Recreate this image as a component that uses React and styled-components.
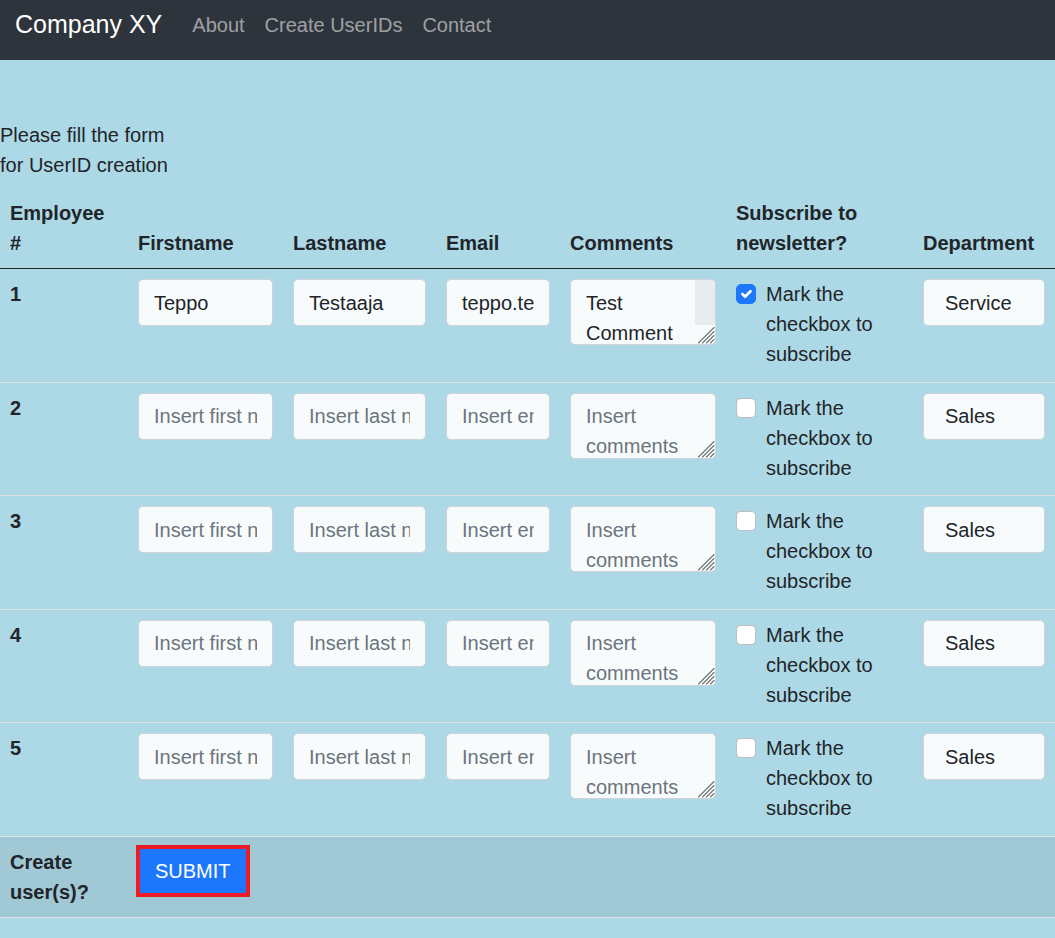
import React from "react";
import styled, { createGlobalStyle } from "styled-components";

const GlobalStyle = createGlobalStyle`
  html, body {
    margin: 0;
    background: #add8e6;
  }
  body {
    font-family: "Liberation Sans", Arial, sans-serif;
    font-size: 20px;
    line-height: 1.5;
    color: #212529;
  }
  * { box-sizing: border-box; }
`;

const Navbar = styled.nav`
  display: flex;
  align-items: center;
  height: 60px;
  padding: 0 15px 10px;
  background: #2e343b;
`;

const Brand = styled.a`
  font-size: 25px;
  color: #fff;
  margin-right: 20px;
  text-decoration: none;
  white-space: nowrap;
`;

const NavLink = styled.a`
  font-size: 20px;
  color: rgba(255, 255, 255, 0.55);
  padding: 0 10px;
  text-decoration: none;
  white-space: nowrap;
`;

const Intro = styled.p`
  margin: 0 0 8px;
  padding-top: 60px;
`;

const Table = styled.table`
  width: 100%;
  border-collapse: collapse;
  table-layout: fixed;
`;

const HeadCell = styled.th`
  text-align: left;
  vertical-align: bottom;
  padding: 10px;
  font-weight: bold;
  border-bottom: 1px solid #212529;
`;

const Row = styled.tr`
  background: ${(p) => (p.$active ? "#a0c8d5" : "transparent")};
  border-bottom: 1px solid #dee2e6;
`;

const RowHead = styled.th`
  text-align: left;
  vertical-align: top;
  padding: 10px;
  font-weight: bold;
`;

const Cell = styled.td`
  vertical-align: top;
  padding: 10px;
`;

const fieldBase = `
  display: block;
  width: 100%;
  padding: 7.5px 15px;
  font-family: inherit;
  font-size: 20px;
  line-height: 30px;
  color: #212529;
  background: #f7fbfc;
  border: 1px solid #ced4da;
  border-radius: 5px;
  outline: none;
  margin: 0;
  &::placeholder { color: #6c757d; opacity: 1; }
`;

const TextInput = styled.input`
  ${fieldBase}
`;

const AreaWrap = styled.div`
  position: relative;
  height: 66px;
`;

const TextArea = styled.textarea`
  ${fieldBase}
  height: 66px;
  resize: none;
  overflow: hidden;
  padding-right: ${(p) => (p.$scroll ? "35px" : "15px")};
`;

const ScrollTrack = styled.div`
  position: absolute;
  top: 1px;
  right: 1px;
  width: 20px;
  height: 45px;
  background: #e9ecef;
  border-top-right-radius: 4px;
  pointer-events: none;
`;

const Grip = styled.svg`
  position: absolute;
  right: 1px;
  bottom: 1px;
  width: 18px;
  height: 18px;
  pointer-events: none;
`;

const Select = styled.select`
  ${fieldBase}
  appearance: none;
  -webkit-appearance: none;
  padding-left: 21px;
`;

const FormCheck = styled.label`
  display: block;
  min-height: 30px;
  padding-left: 30px;
  margin-bottom: 2.5px;
`;

const CheckBox = styled.span`
  float: left;
  width: 20px;
  height: 20px;
  margin-left: -30px;
  margin-top: 5px;
  border-radius: 5px;
  border: 1px solid ${(p) => (p.$checked ? "#1c77fc" : "rgba(0,0,0,0.25)")};
  background: ${(p) => (p.$checked ? "#1c77fc" : "#fff")};
  display: flex;
  align-items: center;
  justify-content: center;
`;

const SubmitButton = styled.button`
  font-family: inherit;
  font-size: 20px;
  line-height: 30px;
  color: #fff;
  background: #1c77fc;
  border: 4px solid #ed1c24;
  padding: 7px 15px;
  margin: -2px 0 0 -2px;
  cursor: pointer;
`;

const rows = [
  { id: 1, first: "Teppo", last: "Testaaja", email: "teppo.testaaja@companyxy.fi", comment: "Test Comment", checked: true, dept: "Service" },
  { id: 2, first: "", last: "", email: "", comment: "", checked: false, dept: "Sales" },
  { id: 3, first: "", last: "", email: "", comment: "", checked: false, dept: "Sales" },
  { id: 4, first: "", last: "", email: "", comment: "", checked: false, dept: "Sales" },
  { id: 5, first: "", last: "", email: "", comment: "", checked: false, dept: "Sales" },
];

const widths = [128, 155, 153, 124, 166, 187, 142];

function Check({ checked }) {
  return (
    <CheckBox $checked={checked} role="checkbox" aria-checked={checked}>
      {checked && (
        <svg width="18" height="18" viewBox="0 0 20 20">
          <path d="m6 10 3 3 6-6" fill="none" stroke="#fff" strokeWidth="3" strokeLinecap="round" strokeLinejoin="round" />
        </svg>
      )}
    </CheckBox>
  );
}

function Comments({ value }) {
  const scroll = value.length > 0;
  return (
    <AreaWrap>
      <TextArea $scroll={scroll} defaultValue={value} placeholder="Insert comments" />
      {scroll && <ScrollTrack />}
      <Grip viewBox="0 0 18 18">
        <g stroke="#6f6f6f" strokeWidth="1.1" strokeLinecap="round">
          <line x1="1.5" y1="17" x2="17" y2="1.5" />
          <line x1="5.5" y1="17" x2="17" y2="5.5" />
          <line x1="9.5" y1="17" x2="17" y2="9.5" />
          <line x1="13.5" y1="17" x2="17" y2="13.5" />
        </g>
      </Grip>
    </AreaWrap>
  );
}

export default function App() {
  return (
    <>
      <GlobalStyle />
      <Navbar>
        <Brand href="#">Company XY</Brand>
        <NavLink href="#">About</NavLink>
        <NavLink href="#">Create UserIDs</NavLink>
        <NavLink href="#">Contact</NavLink>
      </Navbar>
      <Intro>
        Please fill the form
        <br />
        for UserID creation
      </Intro>
      <Table>
        <colgroup>
          {widths.map((w, i) => (
            <col key={i} style={{ width: w }} />
          ))}
        </colgroup>
        <thead>
          <tr>
            <HeadCell>Employee #</HeadCell>
            <HeadCell>Firstname</HeadCell>
            <HeadCell>Lastname</HeadCell>
            <HeadCell>Email</HeadCell>
            <HeadCell>Comments</HeadCell>
            <HeadCell>Subscribe to newsletter?</HeadCell>
            <HeadCell>Department</HeadCell>
          </tr>
        </thead>
        <tbody>
          {rows.map((r) => (
            <Row key={r.id}>
              <RowHead scope="row">{r.id}</RowHead>
              <Cell>
                <TextInput defaultValue={r.first} placeholder="Insert first name" />
              </Cell>
              <Cell>
                <TextInput defaultValue={r.last} placeholder="Insert last name" />
              </Cell>
              <Cell>
                <TextInput defaultValue={r.email} placeholder="Insert email" />
              </Cell>
              <Cell>
                <Comments value={r.comment} />
              </Cell>
              <Cell>
                <FormCheck>
                  <Check checked={r.checked} />
                  Mark the checkbox to subscribe
                </FormCheck>
              </Cell>
              <Cell>
                <Select defaultValue={r.dept}>
                  <option>Sales</option>
                  <option>Service</option>
                  <option>Marketing</option>
                </Select>
              </Cell>
            </Row>
          ))}
          <Row $active>
            <RowHead scope="row">Create user(s)?</RowHead>
            <Cell colSpan={6}>
              <SubmitButton type="button">SUBMIT</SubmitButton>
            </Cell>
          </Row>
        </tbody>
      </Table>
    </>
  );
}
